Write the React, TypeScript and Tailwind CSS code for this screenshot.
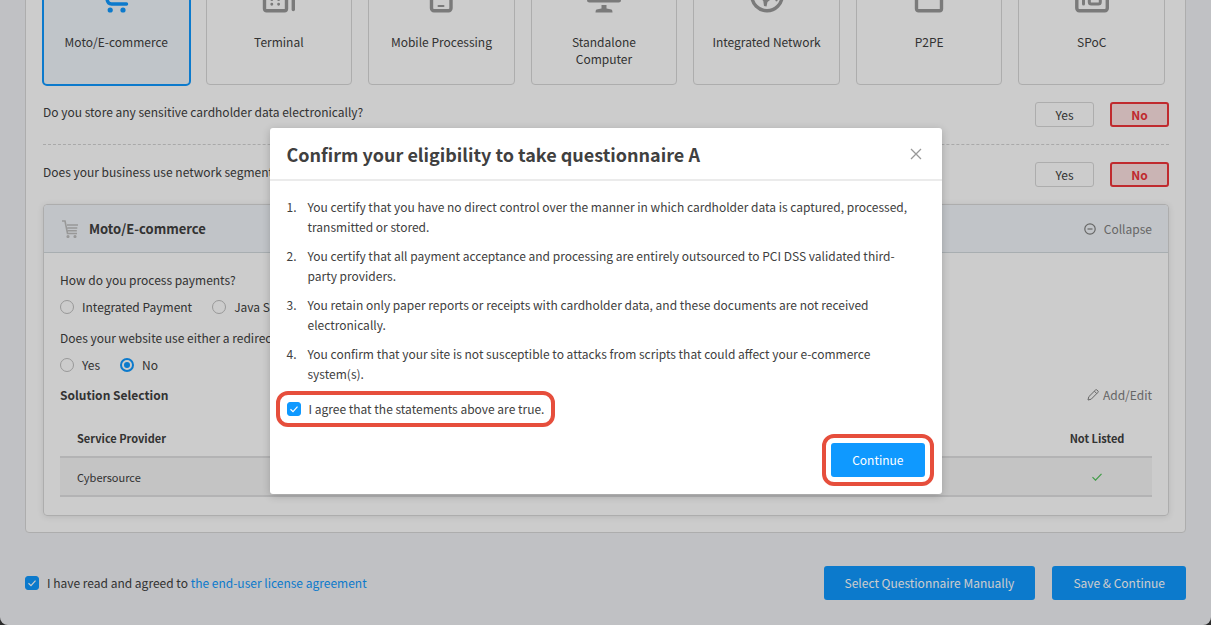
import { useState } from 'react';
import type { ReactNode } from 'react';
import clsx from 'clsx';

interface Method {
  label: string;
  icon: ReactNode;
}

const METHODS: Method[] = [
  {
    label: 'Moto/E-commerce',
    icon: (
      <>
        <path d="M1 3.5h5l2 16.500q.6 5 4.500 5h15" />
        <path d="M7 9h24l-3 9H8" />
        <circle cx="11.200" cy="31" r="2.600" fill="currentColor" stroke="none" />
        <circle cx="24" cy="31" r="2.600" fill="currentColor" stroke="none" />
      </>
    ),
  },
  {
    label: 'Terminal',
    icon: (
      <>
        <rect x="2.500" y="5" width="22" height="26.800" rx="2" />
        <path d="M31.300 3v27.500" />
        <path d="M9.800 20.500h.01M16.600 20.500h.01M9.800 25.200h.01M16.600 25.200h.01M8 12h11" strokeWidth="2.900" />
      </>
    ),
  },
  {
    label: 'Mobile Processing',
    icon: (
      <>
        <rect x="7.500" y="2" width="19.500" height="29.800" rx="2.500" />
        <path d="M14.500 27h5" strokeWidth="2" />
      </>
    ),
  },
  {
    label: 'Standalone Computer',
    icon: (
      <g fill="currentColor" stroke="none">
        <rect x="0" y="1" width="34" height="22.500" rx="2.500" />
        <path d="M14.500 26h5v3.500l5 1q1 .5 1 3H8.500q0-2.500 1-3l5-1z" />
      </g>
    ),
  },
  {
    label: 'Integrated Network',
    icon: (
      <>
        <circle cx="17" cy="16.500" r="15.200" />
        <path d="M8 13l10 2 2.500 3.500-.5 2.500-2.500 2-1 4.500-2.500-.5-.7-5-2.800-3zM25 15l5 2-3 5.500-1.500-.5z" fill="currentColor" stroke="none" />
      </>
    ),
  },
  {
    label: 'P2PE',
    icon: <rect x="4.500" y="12" width="25" height="19.800" rx="2" />,
  },
  {
    label: 'SPoC',
    icon: (
      <>
        <rect x="1.800" y="4" width="30.500" height="27.800" rx="2.500" />
        <path d="M8.500 10v15" strokeWidth="3" />
        <rect x="14.300" y="18.500" width="11" height="6.500" rx="2" strokeWidth="3" />
      </>
    ),
  },
];

const STATEMENTS = [
  'You certify that you have no direct control over the manner in which cardholder data is captured, processed, transmitted or stored.',
  'You certify that all payment acceptance and processing are entirely outsourced to PCI DSS validated third-party providers.',
  'You retain only paper reports or receipts with cardholder data, and these documents are not received electronically.',
  'You confirm that your site is not susceptible to attacks from scripts that could affect your e-commerce system(s).',
];

function MethodTile({ method, selected, onSelect }: { method: Method; selected: boolean; onSelect: () => void }) {
  return (
    <button
      type="button"
      onClick={onSelect}
      className={clsx(
        'flex h-[147px] flex-col items-center rounded px-4 pt-[41px] leading-[17px]',
        selected ? 'bg-[#f0f7fc] text-[#0f99ff] outline-2 -outline-offset-1' : 'text-[#999] outline outline-[#d9d9d9] -outline-offset-1'
      )}
    >
      <svg width="34" height="34" viewBox="0 0 34 34" fill="none" stroke="currentColor" strokeWidth="3.4" strokeLinecap="round" className="shrink-0">
        {method.icon}
      </svg>
      <span className="mt-5 whitespace-nowrap text-[#404040]">
        {method.label === 'Standalone Computer' ? <>Standalone<br />Computer</> : method.label}
      </span>
    </button>
  );
}

function YesNo() {
  const [value, setValue] = useState('No');
  return (
    <div className="flex shrink-0 gap-4">
      {['Yes', 'No'].map((option) => (
        <button
          key={option}
          type="button"
          onClick={() => setValue(option)}
          className={clsx(
            'h-[25px] w-[59px] rounded-[3px] leading-5',
            value === option ? 'border-2 border-[#f0353a] bg-[#fde2e2] font-bold text-[#f0353a]' : 'border border-[#d9d9d9] text-[#404040]'
          )}
        >
          {option}
        </button>
      ))}
    </div>
  );
}

function Checkbox({ id }: { id: string }) {
  const [checked, setChecked] = useState(true);
  return (
    <span className="grid size-[14px] shrink-0">
      <input
        id={id}
        type="checkbox"
        checked={checked}
        onChange={(e) => setChecked(e.target.checked)}
        className="col-start-1 row-start-1 size-[14px] appearance-none rounded-[3px] border border-[#d9d9d9] bg-white checked:border-[#0f99ff] checked:bg-[#0f99ff]"
      />
      {checked && (
        <svg viewBox="0 0 14 14" fill="none" stroke="#fff" strokeWidth="1.2" className="pointer-events-none col-start-1 row-start-1">
          <path d="M3.500 7.200l2.500 2.400 4.500-5" />
        </svg>
      )}
    </span>
  );
}

function Radio({ name, label, defaultChecked }: { name: string; label: string; defaultChecked?: boolean }) {
  return (
    <label className="flex items-center gap-2 whitespace-nowrap">
      <input
        type="radio"
        name={name}
        defaultChecked={defaultChecked}
        className="size-[14px] appearance-none rounded-full border border-[#bfbfbf] checked:border-2 checked:border-[#0f99ff] checked:bg-[#0f99ff] checked:bg-clip-content checked:p-[2px]"
      />
      {label}
    </label>
  );
}

function SolutionPanel() {
  return (
    <section className="rounded border border-[#d9d9d9] shadow-[0_1px_6px_rgba(0,0,0,0.1)]">
      <header className="flex h-12 items-center justify-between rounded-t border-b border-[#d3dade] bg-[#f2f6fa] pr-4 pl-[18px]">
        <div className="flex items-center gap-[10px]">
          <svg width="17" height="18" viewBox="0 0 17 18" fill="none" stroke="#bfbfbf" strokeWidth="1.600">
            <path d="M0 1h3l2.500 12.500H15M5 5h11M5.300 8h10M5.800 10.800h9" />
            <circle cx="6" cy="16.500" r=".8" />
            <circle cx="13" cy="16.500" r=".8" />
          </svg>
          <h2 className="text-[13px] font-bold">Moto/E-commerce</h2>
        </div>
        <button type="button" className="flex items-center gap-2 text-[#808080]">
          <svg width="12" height="12" viewBox="0 0 12 12" fill="none" stroke="currentColor" strokeWidth="1.200">
            <circle cx="6" cy="6" r="5.200" />
            <path d="M3.500 6h5" />
          </svg>
          Collapse
        </button>
      </header>
      <div className="px-4 pt-[17px] pb-[18px]">
        <p>How do you process payments?</p>
        <div className="mt-[7px] flex gap-5">
          <Radio name="payments" label="Integrated Payment" />
          <Radio name="payments" label="Java Script" />
        </div>
        <p className="mt-[11px]">Does your website use either a redirect or an iFrame?</p>
        <div className="mt-[7px] flex gap-5">
          <Radio name="redirect" label="Yes" />
          <Radio name="redirect" label="No" defaultChecked />
        </div>
        <div className="mt-[10px] flex justify-between">
          <h3 className="font-bold">Solution Selection</h3>
          <button type="button" className="flex items-center gap-1 text-[#808080]">
            <svg width="12" height="12" viewBox="0 0 12 12" fill="none" stroke="currentColor">
              <path d="M1 11l.8-3.300L8.500 1q.7-.6 1.500 0l.9.900q.7.700 0 1.500L4.200 10.200zM7.400 2.200l2.400 2.400" />
            </svg>
            Add/Edit
          </button>
        </div>
        <table className="mt-[14px] w-full text-[11px]">
          <thead>
            <tr className="h-[38px] border-b-2 border-[#e0e0e2]">
              <th className="px-[17px] text-left font-bold">Service Provider</th>
              <th className="w-[110px] text-center font-bold">Not Listed</th>
            </tr>
          </thead>
          <tbody>
            <tr className="h-[39px] border-b-2 border-[#e0e0e2] bg-[#f5f5f5]">
              <td className="px-[17px]">Cybersource</td>
              <td>
                <svg width="10" height="8" viewBox="0 0 10 8" fill="none" stroke="#52c45a" strokeWidth="1.200" className="mx-auto" aria-label="Yes">
                  <path d="M.5 4.200l3 3L9.500 .8" />
                </svg>
              </td>
            </tr>
          </tbody>
        </table>
      </div>
    </section>
  );
}

function EligibilityDialog() {
  return (
    <div className="absolute inset-0 flex items-start justify-center bg-black/20 pt-32">
      <div role="dialog" aria-labelledby="dialog-title" className="w-full max-w-2xl rounded-[3px] bg-white shadow-[0_2px_8px_rgba(0,0,0,0.2)]">
        <header className="flex h-[53px] items-center justify-between border-b-2 border-[#ebebeb] pr-5 pl-[17px]">
          <h1 id="dialog-title" className="text-lg leading-6 font-bold">Confirm your eligibility to take questionnaire A</h1>
          <button type="button" aria-label="Close" className="text-[#999]">
            <svg width="12" height="12" viewBox="0 0 12 12" stroke="currentColor" strokeWidth="1.300">
              <path d="M1 1l10 10M11 1L1 11" />
            </svg>
          </button>
        </header>
        <div className="px-[17px] pt-4 pb-[17px]">
          <ol className="space-y-[9px] pr-3">
            {STATEMENTS.map((text, i) => (
              <li key={text} className="flex">
                <span className="w-[21px] shrink-0">{i + 1}.</span>
                <span>{text}</span>
              </li>
            ))}
          </ol>
          <div className="relative mt-[15px] flex w-fit items-center gap-2">
            <Checkbox id="agree" />
            <label htmlFor="agree">I agree that the statements above are true.</label>
            <div className="pointer-events-none absolute -inset-x-[11px] -inset-y-2 rounded-xl border-4 border-[#e64e3c]" />
          </div>
          <div className="relative mt-6 ml-auto w-fit">
            <button type="button" className="h-[34px] rounded-[3px] bg-[#0f99ff] px-[21px] text-white">Continue</button>
            <div className="pointer-events-none absolute -inset-[9px] rounded-xl border-4 border-[#e64e3c]" />
          </div>
        </div>
      </div>
    </div>
  );
}

export default function App() {
  const [method, setMethod] = useState('Moto/E-commerce');

  return (
    <div className="h-screen bg-[#2b2b2b] font-['Noto_Sans_CJK_SC',sans-serif] text-xs leading-5 text-[#404040]">
      <div className="relative flex h-full flex-col justify-end overflow-hidden rounded-b-lg bg-[#f0f2f5]">
        <main className="mx-[25px] rounded border border-[#d9d9d9] bg-white py-4 pr-4 pl-[17px]">
          <div className="grid grid-cols-7 gap-4 pr-1">
            {METHODS.map((m) => (
              <MethodTile key={m.label} method={m} selected={m.label === method} onSelect={() => setMethod(m.label)} />
            ))}
          </div>
          <div className="flex justify-between border-b border-dashed border-[#d4d4d4] py-[17px]">
            <p>Do you store any sensitive cardholder data electronically?</p>
            <YesNo />
          </div>
          <div className="flex justify-between py-[17px]">
            <p>Does your business use network segmentation?</p>
            <YesNo />
          </div>
          <SolutionPanel />
        </main>
        <footer className="flex items-center justify-between px-[25px] pt-[33px] pb-[25px]">
          <div className="flex items-center gap-2">
            <Checkbox id="eula" />
            <label htmlFor="eula">
              I have read and agreed to <a href="#eula" className="text-[#0f99ff]">the end-user license agreement</a>
            </label>
          </div>
          <div className="flex gap-[17px]">
            <button type="button" className="h-[34px] rounded-[3px] bg-[#0f99ff] px-[21px] text-white">Select Questionnaire Manually</button>
            <button type="button" className="h-[34px] rounded-[3px] bg-[#0f99ff] px-[21px] text-white">Save &amp; Continue</button>
          </div>
        </footer>
        <EligibilityDialog />
      </div>
    </div>
  );
}
